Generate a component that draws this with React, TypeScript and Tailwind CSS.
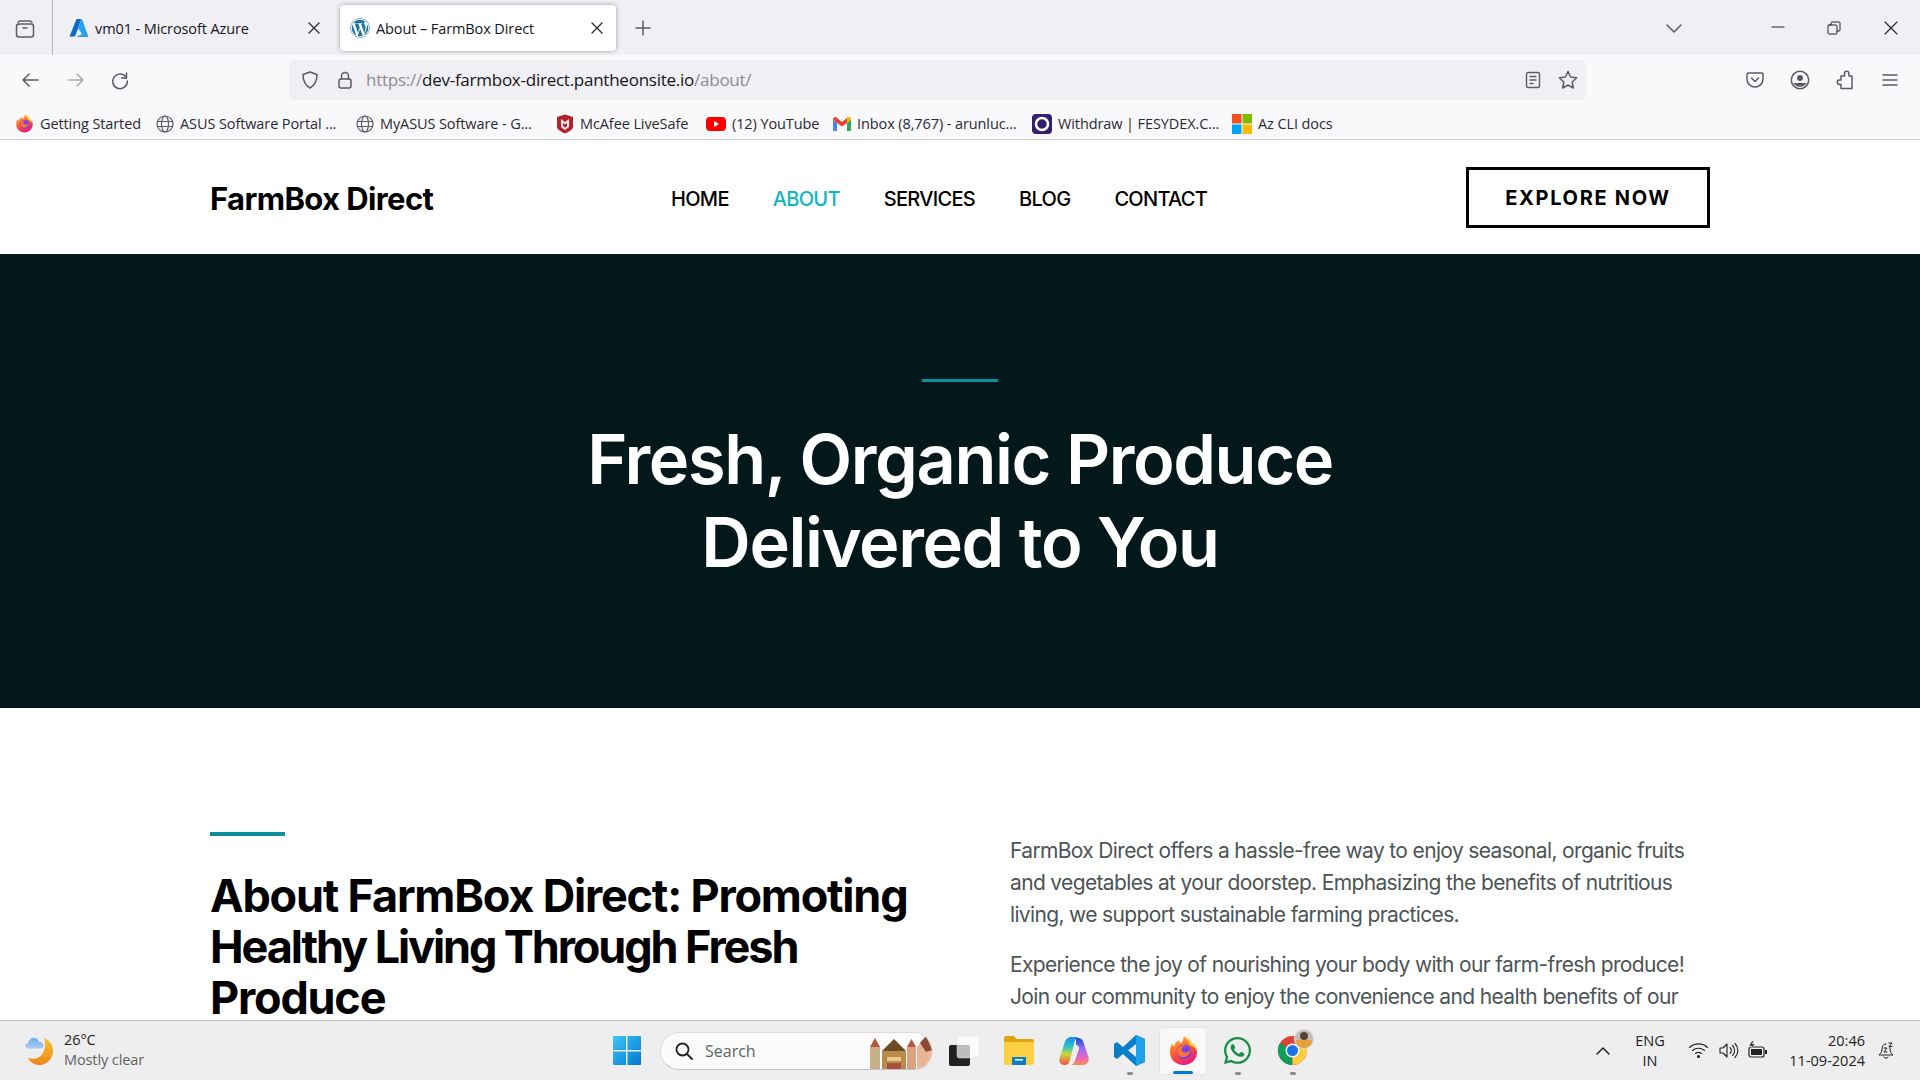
import React from "react";
import { FaWhatsapp, FaWordpress } from "react-icons/fa";

const chrome = "font-['Open_Sans','Noto_Sans',sans-serif]";
const site = "font-['Inter','Liberation_Sans',sans-serif]";
const ic = "#5b5b66";

const Ico = ({ s = 20, children, vb = "0 0 20 20", c = ic, w = 1.5 }: any) => (
  <svg width={s} height={s} viewBox={vb} fill="none" stroke={c} strokeWidth={w} strokeLinecap="round" strokeLinejoin="round" className="shrink-0">{children}</svg>
);

const Firefox = ({ s = 18, id = "ffa" }: { s?: number; id?: string }) => (
  <svg width={s} height={s} viewBox="0 0 32 32" className="shrink-0">
    <defs>
      <linearGradient id={id} x1="0.2" y1="0" x2="0.7" y2="1"><stop offset="0" stopColor="#ffbd2e" /><stop offset=".5" stopColor="#ff5634" /><stop offset="1" stopColor="#e31587" /></linearGradient>
    </defs>
    <path d="M16 31C8 31 2 25 2 17c0-3 .8-6 2.500-8.500.2 1.500.8 2.500 1.800 3.300C7 8.500 9.500 6 12 5.500c-.4 1.500 0 2.500 1 3 2-1.500 3-4 3.500-7.500 3 3 4 5 6.500 6.500C27 10 30 13 30 17c0 8-6 14-14 14z" fill={`url(#${id})`} />
    <path d="M19 1c3 3 4 5.500 6.500 7.500C28 11 30 14 30 17c-2-4-5-6-8-7-1-3-2-6-3-9z" fill="#ffd02e" />
    <circle cx="16.500" cy="17.500" r="7.500" fill="#7542e5" />
    <path d="M10 14c2-3 6-4 9-2.500-3 0-5 1-5 3 0 3 3 4 5 3.500 2-.5 3.500-2 4-3.500.5 4-3 8.500-7.500 8.500S8 19 10 14z" fill="#ff7139" />
  </svg>
);

const Globe = () => (
  <Ico s={18} vb="0 0 18 18" w={1.2}><circle cx="9" cy="9" r="8" /><ellipse cx="9" cy="9" rx="3.500" ry="8" /><path d="M1.500 6.500h15M1.500 11.500h15" /></Ico>
);

const Bookmark = ({ icon, label, w }: any) => (
  <div className="flex items-center gap-[6px] shrink-0" style={{ width: w }}>
    {icon}
    <span className="text-[14.5px] leading-none text-[#2b2a33] whitespace-nowrap tracking-[-0.1px] font-normal pt-[2px]">{label}</span>
  </div>
);

const TabTitle = ({ children }: any) => <span className="text-[14.5px] text-[#15141a] whitespace-nowrap flex-1 tracking-[-0.1px] pt-[2px]">{children}</span>;
const X = () => <Ico s={14} vb="0 0 14 14" c="#2b2a33" w={1.3}><path d="M2 2l10 10M12 2L2 12" /></Ico>;

function TabBar() {
  return (
    <div className="h-[55px] bg-[#f0f0f4] flex items-center shrink-0">
      <div className="w-[53px] h-full flex items-center justify-center border-r border-[#b5b5ba] shrink-0">
        <span className="-ml-[3px] flex">
          <Ico s={22} vb="0 0 22 22"><path d="M4 5.500C4.500 4.500 5 4 6 4h10c1 0 1.500.5 2 1.500" /><rect x="2.500" y="7" width="17" height="13" rx="2.500" /><path d="M9 11h4" /></Ico>
        </span>
      </div>
      <div className="w-[287px] h-full flex items-center pl-[16px] pr-[19px] gap-[6px] shrink-0">
        <svg width="20" height="20" viewBox="0 0 20 20" className="shrink-0"><path d="M7.500 1h5L6 18.500H.5z" fill="#0a6cc4" /><path d="M13 1l6.500 18H7l6-3-4-6z" fill="#2a9fee" /></svg>
        <TabTitle>vm01 - Microsoft Azure</TabTitle>
        <X />
      </div>
      <div className="w-[276px] h-[46px] bg-white rounded-[4px] shadow-[0_0_4px_rgba(0,0,0,0.35)] flex items-center pl-[10px] pr-[12px] gap-[6px] shrink-0">
        <FaWordpress size={20} color="#21759b" className="shrink-0" />
        <TabTitle>About – FarmBox Direct</TabTitle>
        <X />
      </div>
      <div className="w-[54px] flex justify-center shrink-0">
        <Ico s={18} vb="0 0 18 18"><path d="M9 2v14M2 9h14" /></Ico>
      </div>
      <div className="flex-1" />
      <div className="w-[40px] flex justify-center shrink-0 mr-[76px]">
        <Ico s={18} vb="0 0 18 18"><path d="M2 6l7 7 7-7" /></Ico>
      </div>
      <div className="w-[16px] mr-[40px] flex justify-center"><Ico s={14} vb="0 0 14 14" c="#222" w={1}><path d="M1 6h12" /></Ico></div>
      <div className="w-[16px] mr-[41px] flex justify-center"><Ico s={14} vb="0 0 14 14" c="#222" w={1}><rect x="1" y="4" width="9" height="9" rx="1" /><path d="M4 4V2a1 1 0 0 1 1-1h7a1 1 0 0 1 1 1v7a1 1 0 0 1-1 1h-2" /></Ico></div>
      <div className="w-[16px] mr-[21px] flex justify-center"><Ico s={16} vb="0 0 16 16" c="#222" w={1.1}><path d="M2 2l12 12M14 2L2 14" /></Ico></div>
    </div>
  );
}

function Toolbar() {
  return (
    <div className="h-[53px] bg-[#f9f9fb] flex items-center pl-[20px] pb-[4px] shrink-0">
      <div className="flex items-center gap-[26px] w-[269px] shrink-0">
        <Ico s={20}><path d="M18 10H3M9 4l-6 6 6 6" /></Ico>
        <Ico s={20} c="#a9a9af"><path d="M2 10h15M11 4l6 6-6 6" /></Ico>
        <span className="-ml-[2px] flex"><Ico s={20}><path d="M16.500 3v5H11.500" /><path d="M16.500 8A7.300 7.300 0 1 0 17.300 11" /></Ico></span>
      </div>
      <div className="w-[1297px] h-[40px] bg-[#f0f0f4] rounded-[5px] flex items-center pl-[11px] pr-[7px] shrink-0">
        <Ico s={20}><path d="M10 2l7 2.500c0 6-1.500 10.500-7 13.500C4.500 15 3 10.500 3 4.500z" /></Ico>
        <span className="ml-[15px]"><Ico s={20}><rect x="4" y="9" width="12" height="9" rx="2" /><path d="M6.500 9V6a3.500 3.500 0 0 1 7 0v3" /></Ico></span>
        <span className="ml-[11px] text-[17px] tracking-[-0.25px] text-[#8b8b92] whitespace-nowrap flex-1">https://<span className="text-[#15141a]">dev-farmbox-direct.pantheonsite.io</span>/about/</span>
        <Ico s={18} vb="0 0 18 18" w={1.4}><rect x="2.500" y="1.500" width="13" height="15" rx="2" /><path d="M6 5.500h6M6 9h6M6 12.500h3" /></Ico>
        <span className="ml-[15px] flex"><Ico s={22} vb="0 0 22 22"><path d="M11 2.500l2.600 5.500 6 .8-4.400 4.200 1.100 6L11 16l-5.300 3 1.100-6L2.400 8.800l6-.8z" /></Ico></span>
      </div>
      <div className="flex-1 flex items-center justify-end pr-[20px] gap-[25px]">
        <Ico s={20}><path d="M3 3h14a1 1 0 0 1 1 1v5c0 5-4 8-8 8s-8-3-8-8V4a1 1 0 0 1 1-1z" /><path d="M6.500 8l3.500 3.500L13.500 8" /></Ico>
        <svg width="20" height="20" viewBox="0 0 20 20" className="shrink-0"><circle cx="10" cy="10" r="8.700" fill="none" stroke={ic} strokeWidth="1.500" /><circle cx="10" cy="8" r="3" fill={ic} /><path d="M3.500 13h13a7.500 7.500 0 0 1-13 0z" fill={ic} /></svg>
        <Ico s={20}><path d="M9.500 3.500a2.200 2.200 0 0 1 4.400 0V6H17v12.500H6v-4H4.500a2.200 2.200 0 0 1 0-4.400H6V6h3.500z" /></Ico>
        <Ico s={20}><path d="M3 5h14M3 10h14M3 15h14" /></Ico>
      </div>
    </div>
  );
}

function Bookmarks() {
  return (
    <div className="h-[32px] bg-[#f9f9fb] border-b border-[#cfcfd1] flex items-center pl-[15px] shrink-0">
      <Bookmark w={141} label="Getting Started" icon={<Firefox s={19} id="ffb" />} />
      <Bookmark w={200} label="ASUS Software Portal ..." icon={<Globe />} />
      <Bookmark w={200} label="MyASUS Software - G..." icon={<Globe />} />
      <Bookmark w={150} label="McAfee LiveSafe" icon={<svg width="18" height="20" viewBox="0 0 18 20" className="shrink-0"><path d="M1 3l8-2.500L17 3v10c0 2-4 5-8 6.500C5 18 1 15 1 13z" fill="#b3232c" /><path d="M5 5l4 3 4-3v8l-4 3-4-3z" fill="#f4e9e9" /><path d="M7 9l2 1.500L11 9v3l-2 1.500L7 12z" fill="#b3232c" /></svg>} />
      <Bookmark w={127} label="(12) YouTube" icon={<svg width="20" height="14" viewBox="0 0 20 14" className="shrink-0"><rect width="20" height="14" rx="4" fill="#f00" /><path d="M8 4l5 3-5 3z" fill="#fff" /></svg>} />
      <Bookmark w={199} label="Inbox (8,767) - arunluc..." icon={<svg width="18" height="14" viewBox="0 0 18 14" className="shrink-0"><path d="M0 2.500V13a1 1 0 0 0 1 1h3V6z" fill="#4285f4" /><path d="M18 2.500V13a1 1 0 0 1-1 1h-3V6z" fill="#34a853" /><path d="M0 2.500C0 .5 2-.5 3.500.5L9 5l5.500-4.500C16-.5 18 .5 18 2.500L14 6 9 9.500 4 6z" fill="#ea4335" /><path d="M14 .9l.5-.4C16-.5 18 .5 18 2.500L14 6z" fill="#fbbc04" /></svg>} />
      <Bookmark w={200} label="Withdraw | FESYDEX.C..." icon={<svg width="20" height="20" viewBox="0 0 20 20" className="shrink-0"><rect width="20" height="20" rx="4" fill="#34206b" /><circle cx="10" cy="10" r="6" fill="none" stroke="#fff" strokeWidth="2.500" /><circle cx="10" cy="10" r="2.500" fill="#34206b" /></svg>} />
      <Bookmark w={100} label="Az CLI docs" icon={<svg width="20" height="20" viewBox="0 0 20 20" className="shrink-0"><rect width="9.500" height="9.500" fill="#f25022" /><rect x="10.500" width="9.500" height="9.500" fill="#7fba00" /><rect y="10.500" width="9.500" height="9.500" fill="#00a4ef" /><rect x="10.500" y="10.500" width="9.500" height="9.500" fill="#ffb900" /></svg>} />
    </div>
  );
}

function SiteNav() {
  return (
    <div className="h-[114px] bg-white flex items-center justify-center shrink-0">
      <div className="w-[1500px] flex items-center">
        <div className="w-[461px] text-[31px] font-bold text-black tracking-[-0.6px] leading-none pt-[2px]">FarmBox Direct</div>
        <nav className="flex-1 flex items-center gap-[44px] text-[20px] font-medium tracking-[-0.7px] text-black leading-none pt-[4px]">
          <span>HOME</span>
          <span className="text-[#13b5bd]">ABOUT</span>
          <span>SERVICES</span>
          <span>BLOG</span>
          <span>CONTACT</span>
        </nav>
        <div className="w-[244px] h-[61px] border-[3px] border-black flex items-center justify-center text-[20px] font-bold tracking-[1.7px] text-black leading-none pt-[1px]">EXPLORE NOW</div>
      </div>
    </div>
  );
}

function Hero() {
  return (
    <section className="h-[454px] bg-[#03181a] flex flex-col items-center pt-[125px] shrink-0">
      <div className="w-[76px] h-[3px] bg-[#0e8f9b]" />
      <h1 className="mt-[36px] text-center text-white text-[68.5px] leading-[83px] font-semibold tracking-[-1.4px]">
        Fresh, Organic Produce<br />Delivered to You
      </h1>
    </section>
  );
}

function About() {
  return (
    <section className="bg-white flex justify-center pt-[124px]">
      <div className="w-[1500px] grid grid-cols-[800px_700px]">
        <div>
          <div className="w-[75px] h-[4px] bg-[#0e8f9b]" />
          <h2 className="mt-[34px] text-[45px] leading-[51px] font-bold text-black tracking-[-1.2px]">
            About FarmBox Direct: Promoting<br /><span className="tracking-[-2.1px]">Healthy Living Through Fresh</span><br />Produce
          </h2>
        </div>
        <div className="text-[21px] leading-[32px] text-[#4d5455] tracking-[-0.65px] mt-[3px]">
          <p>FarmBox Direct offers a hassle-free way to enjoy seasonal, organic fruits<br />and vegetables at your doorstep. Emphasizing the benefits of nutritious<br />living, we support sustainable farming practices.</p>
          <p className="mt-[18px]">Experience the joy of nourishing your body with our farm-fresh produce!<br />Join our community to enjoy the convenience and health benefits of our</p>
        </div>
      </div>
    </section>
  );
}

const Dot = () => <span className="absolute left-1/2 -translate-x-1/2 bottom-[-9px] w-[6px] h-[3px] rounded-full bg-[#8a8a8a]" />;

function Taskbar() {
  return (
    <div className="h-[60px] bg-[#eeeeee] border-t border-[#bdbdbd] flex items-center shrink-0 relative">
      <div className="flex items-center pl-[25px] w-[613px] shrink-0">
        <svg width="30" height="30" viewBox="0 0 30 30" className="shrink-0">
          <defs>
            <linearGradient id="moon" x1="0.5" y1="0" x2="0.5" y2="1"><stop offset="0" stopColor="#f8c52c" /><stop offset="1" stopColor="#ef8418" /></linearGradient>
            <linearGradient id="cloud" x1="0.5" y1="0" x2="0.5" y2="1"><stop offset="0" stopColor="#6aa8ee" /><stop offset="1" stopColor="#b4cdf2" /></linearGradient>
          </defs>
          <path d="M19 2c5.500 2 9 7 9 13 0 7.500-6 14-13.500 14C9 29 5 26 2.500 21.500c6 2.500 12 1 15-3.500 2.500-4.500 3.500-10 1.500-16z" fill="url(#moon)" />
          <path d="M3.500 13C1 13 0 11.500 0 10s1-3 3-3.200C3.500 3.500 6 1.500 9 1.500c2.500 0 4.500 1.500 5 4C17 5.500 19 7.500 19 9.500S17.500 13 15.500 13z" fill="url(#cloud)" stroke="#fff" strokeWidth=".6" />
        </svg>
        <div className="ml-[9px] flex flex-col text-[14.5px] leading-[20px] -tracking-[0.1px] -mt-[1px]">
          <span className="text-[#1c1c1c]">26°C</span>
          <span className="text-[#5f5f5f]">Mostly clear</span>
        </div>
      </div>
      <svg width="28" height="29" viewBox="0 0 28 29" className="shrink-0">
        <defs><linearGradient id="win" x1="0" y1="0" x2="1" y2="1"><stop offset="0" stopColor="#3fc4f7" /><stop offset="1" stopColor="#0078d4" /></linearGradient></defs>
        <path d="M0 1a1 1 0 0 1 1-1h12v14H0zM14.500 0H27a1 1 0 0 1 1 1v13H14.500zM0 15.500h13V29H1a1 1 0 0 1-1-1zM14.500 15.500H28V28a1 1 0 0 1-1 1H14.500z" fill="url(#win)" />
      </svg>
      <div className="ml-[19px] w-[273px] h-[38px] rounded-full bg-[#fbfbfb] border border-[#dcdcdc] border-b-[#c4c4c4] flex items-center pl-[13px] overflow-hidden shrink-0">
        <Ico s={20} c="#222" w={1.8}><circle cx="8.500" cy="8.500" r="6" /><path d="M13 13l5 5" /></Ico>
        <span className="ml-[11px] text-[16px] text-[#5f5f5f] flex-1">Search</span>
        <svg width="62" height="36" viewBox="0 0 62 36" className="shrink-0">
          <rect x="0" y="14" width="10" height="22" fill="#c9b089" /><path d="M0 14l5-9 5 9z" fill="#b5553c" />
          <rect x="12" y="18" width="24" height="18" fill="#b98a4c" /><path d="M12 18L24 6l12 12z" fill="#6c4a24" /><rect x="17" y="24" width="14" height="4" fill="#e8c98a" /><rect x="17" y="30" width="14" height="6" fill="#a6503d" />
          <rect x="37" y="14" width="9" height="22" fill="#dca17d" /><path d="M37 14l4.500-8 4.500 8z" fill="#b5553c" />
          <path d="M47 14L56 3c4 2 6 8 6 14v8c0 5-3 11-6 11h-9z" fill="#eab596" /><path d="M50 10l6-7 6 14-6 2z" fill="#8c4a36" />
        </svg>
      </div>
      <div className="ml-[16px] flex items-center gap-[25px] shrink-0">
        <svg width="30" height="30" viewBox="0 0 30 30" className="shrink-0"><rect x="0" y="9" width="21" height="21" rx="2" fill="#222" /><rect x="8" y="0" width="22" height="22" rx="2" fill="#fff" fillOpacity=".7" stroke="#ddd" strokeWidth=".5" /></svg>
        <svg width="30" height="29" viewBox="0 0 30 29" className="shrink-0"><path d="M0 2a2 2 0 0 1 2-2h8l3 3h15a2 2 0 0 1 2 2v2H0z" fill="#e2a50f" /><path d="M0 6h30v21a2 2 0 0 1-2 2H2a2 2 0 0 1-2-2z" fill="#fdd044" /><rect x="8" y="21" width="14" height="8" rx="1" fill="#0f7ac5" /><rect x="11" y="23" width="8" height="1.500" fill="#fff" /></svg>
        <svg width="30" height="30" viewBox="0 0 30 30" className="shrink-0">
          <defs>
            <linearGradient id="cop" x1="0.5" y1="0" x2="0.5" y2="1"><stop offset="0" stopColor="#1c8fe8" /><stop offset=".35" stopColor="#2cc3c0" /><stop offset=".6" stopColor="#c9d83f" /><stop offset="1" stopColor="#f0503c" /></linearGradient>
            <linearGradient id="cop2" x1="0.5" y1="0" x2="0.5" y2="1"><stop offset="0" stopColor="#1a4fd0" /><stop offset=".4" stopColor="#9b6df2" /><stop offset=".75" stopColor="#ee66b5" /><stop offset="1" stopColor="#f98a5a" /></linearGradient>
          </defs>
          <path d="M12 1h7c-2 1-3 3-3.500 5L11 24c-.7 3-2.500 5-5 5H5c-3.500 0-5.500-3-4.500-6.500L5.500 7C6.500 3.500 9 1 12 1z" fill="url(#cop)" />
          <path d="M17 1h2c3 0 5 1.500 5.500 4.500L29.500 20c1 4-1.500 8-5.500 8H11c2.500 0 4.500-2 5-4.500L20 12c.5-2-1-4-3-4z" fill="url(#cop2)" transform="translate(0 1)" />
        </svg>
        <span className="relative flex">
          <svg width="31" height="31" viewBox="0 0 31 31" className="shrink-0"><path d="M22 0l9 4v23l-9 4-13-12-6 5-3-2V9l3-2 6 5zM22 9l-8 6.500 8 6.500z" fill="#0a7fc9" /><path d="M22 0l9 4v23l-9 4z" fill="#1fa0ea" /></svg>
          <Dot />
        </span>
        <span className="relative w-[48px] h-[48px] -ml-[11px] -mr-[10px] bg-[#f8f8f8] border border-[#e4e4e4] rounded-[4px] flex items-center justify-center">
          <Firefox s={31} />
          <span className="absolute left-1/2 -translate-x-1/2 bottom-[0px] w-[20px] h-[3px] rounded-full bg-[#0078d4]" />
        </span>
        <span className="relative flex">
          <FaWhatsapp size={31} color="#1b8a4a" />
          <Dot />
        </span>
        <span className="relative flex -ml-[1px]">
          <svg width="31" height="31" viewBox="0 0 32 32" className="shrink-0"><circle cx="16" cy="16" r="15" fill="#db4437" /><path d="M16 16L3 8.500A15 15 0 0 0 16 31z" fill="#0f9d58" /><path d="M16 16L16 31A15 15 0 0 0 29 8.500z" fill="#ffcd40" /><circle cx="16" cy="16" r="7.200" fill="#fff" /><circle cx="16" cy="16" r="5.700" fill="#1a73e8" /></svg>
          <Dot />
          <span className="absolute -top-[6px] -right-[6px] w-[20px] h-[20px] rounded-full bg-[#c4bdb6] border border-[#ddd] overflow-hidden flex flex-col items-center">
            <span className="mt-[2px] w-[8px] h-[9px] rounded-full bg-[#5a4336]" />
            <span className="mt-[0px] w-[16px] h-[8px] bg-[#e9a13c]" />
          </span>
        </span>
      </div>
      <div className="flex-1" />
      <div className="flex items-center shrink-0 pr-[24px]">
        <Ico s={16} vb="0 0 16 16" c="#222" w={1.5}><path d="M2 11l6-6 6 6" /></Ico>
        <div className="ml-[22px] w-[34px] text-center text-[14.5px] leading-[20px] text-[#222]">ENG<br />IN</div>
        <div className="ml-[21px] flex items-center gap-[9px]">
          <Ico s={21} vb="0 0 21 21" c="#222" w={1.1}><path d="M1.500 7.500a13 13 0 0 1 18 0M4.500 10.500a9 9 0 0 1 12 0M7.500 13.500a5 5 0 0 1 6 0" /><circle cx="10.500" cy="16.500" r="1" fill="#222" /></Ico>
          <Ico s={21} vb="0 0 21 21" c="#222" w={1.1}><path d="M2 8h3l4-4v13l-4-4H2zM12 7.500a4 4 0 0 1 0 6M14.500 5.500a7 7 0 0 1 0 10M17 3.500a10 10 0 0 1 0 14" /></Ico>
          <svg width="20" height="21" viewBox="0 0 20 21" className="shrink-0"><rect x="1" y="7" width="15" height="10" rx="2" fill="none" stroke="#222" strokeWidth="1.200" /><rect x="3" y="9" width="11" height="6" fill="#222" /><rect x="17" y="10" width="2" height="4" fill="#222" /><path d="M4 1L1 6h3L2 10l5-6H4l2-3z" fill="#222" stroke="#eee" strokeWidth=".5" /></svg>
        </div>
        <div className="ml-[16px] w-[81px] text-right text-[14.5px] leading-[20px] text-[#222] whitespace-nowrap">20:46<br />11-09-2024</div>
        <span className="ml-[12px] flex">
          <Ico s={19} vb="0 0 19 19" c="#222" w={1}><path d="M9 3c-3 0-4 2.500-4 5 0 3-1 4-3 6h14c-2-2-3-3-3-6 0-1 0-1.500-.5-2.500M7 16a2.200 2.200 0 0 0 4 0" /><path d="M7 7h3l-3 4h3M12 2h3l-3 3.500h3" /></Ico>
        </span>
      </div>
    </div>
  );
}

export default function App() {
  return (
    <div className={`w-[1920px] h-[1080px] flex flex-col overflow-hidden bg-white ${chrome}`}>
      <TabBar />
      <Toolbar />
      <Bookmarks />
      <main className={`flex-1 min-h-0 overflow-hidden ${site}`}>
        <SiteNav />
        <Hero />
        <About />
      </main>
      <Taskbar />
    </div>
  );
}
